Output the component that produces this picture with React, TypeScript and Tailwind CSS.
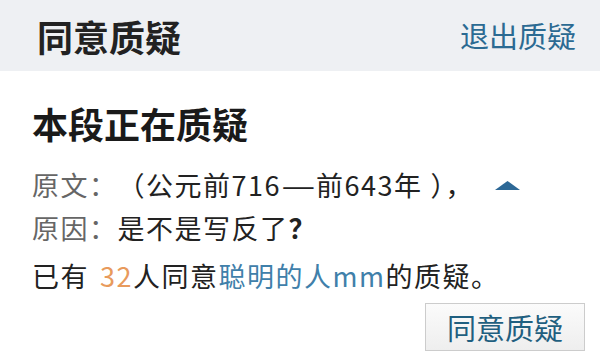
import React from "react";

export default function App() {
  const font = { fontFamily: '"Noto Sans CJK SC", "Noto Sans", sans-serif' };
  return (
    <div className="w-[600px] h-[358px] bg-white overflow-hidden" style={font}>
      <div className="h-[71px] bg-[#eef0f3] flex items-center justify-between pl-[37px] pr-[24px]">
        <div className="text-[36px] leading-none font-bold text-[#222222]">同意质疑</div>
        <div className="text-[29px] leading-none text-[#2b6a92]">退出质疑</div>
      </div>
      <div className="pl-[32px] pr-[15px]">
        <div className="mt-[28px] text-[36px] leading-[48px] font-bold text-[#1a1a1a]">本段正在质疑</div>
        <div className="mt-[16px] text-[27px] leading-[43px] tracking-[1.5px] text-[#222222] flex items-center whitespace-nowrap">
          <span className="text-[#666666]">原文：</span>
          <span>（公元前716</span>
          <span className="inline-block w-[35px] text-center tracking-normal scale-x-[1.4]">—</span>
          <span>前643年</span>
          <span className="ml-[8px]">），</span>
          <svg width="25" height="9" viewBox="0 0 25 9" className="ml-[21px] mt-[2px]">
            <polygon points="12.5,0 25,9 0,9" fill="#2d6896" />
          </svg>
        </div>
        <div className="text-[27px] leading-[43px] tracking-[1.5px] text-[#222222] whitespace-nowrap">
          <span className="text-[#666666]">原因：</span>
          <span>是不是写反了</span>
          <span className="font-bold">？</span>
        </div>
        <div className="mt-[5px] text-[27px] leading-[43px] tracking-[1.5px] text-[#222222] whitespace-nowrap">
          <span>已有</span>
          <span className="ml-[11px] text-[#e89a5c]">32</span>
          <span>人同意</span>
          <span className="text-[#3f80aa]">聪明的人mm</span>
          <span>的质疑。</span>
        </div>
        <div className="mt-[6px] flex justify-end">
          <div className="w-[160px] h-[48px] border border-[#cccccc] bg-gradient-to-b from-[#fbfbfb] to-[#eeeeee] flex items-center justify-center text-[29px] leading-none text-[#1f5f80]">
            同意质疑
          </div>
        </div>
      </div>
    </div>
  );
}
